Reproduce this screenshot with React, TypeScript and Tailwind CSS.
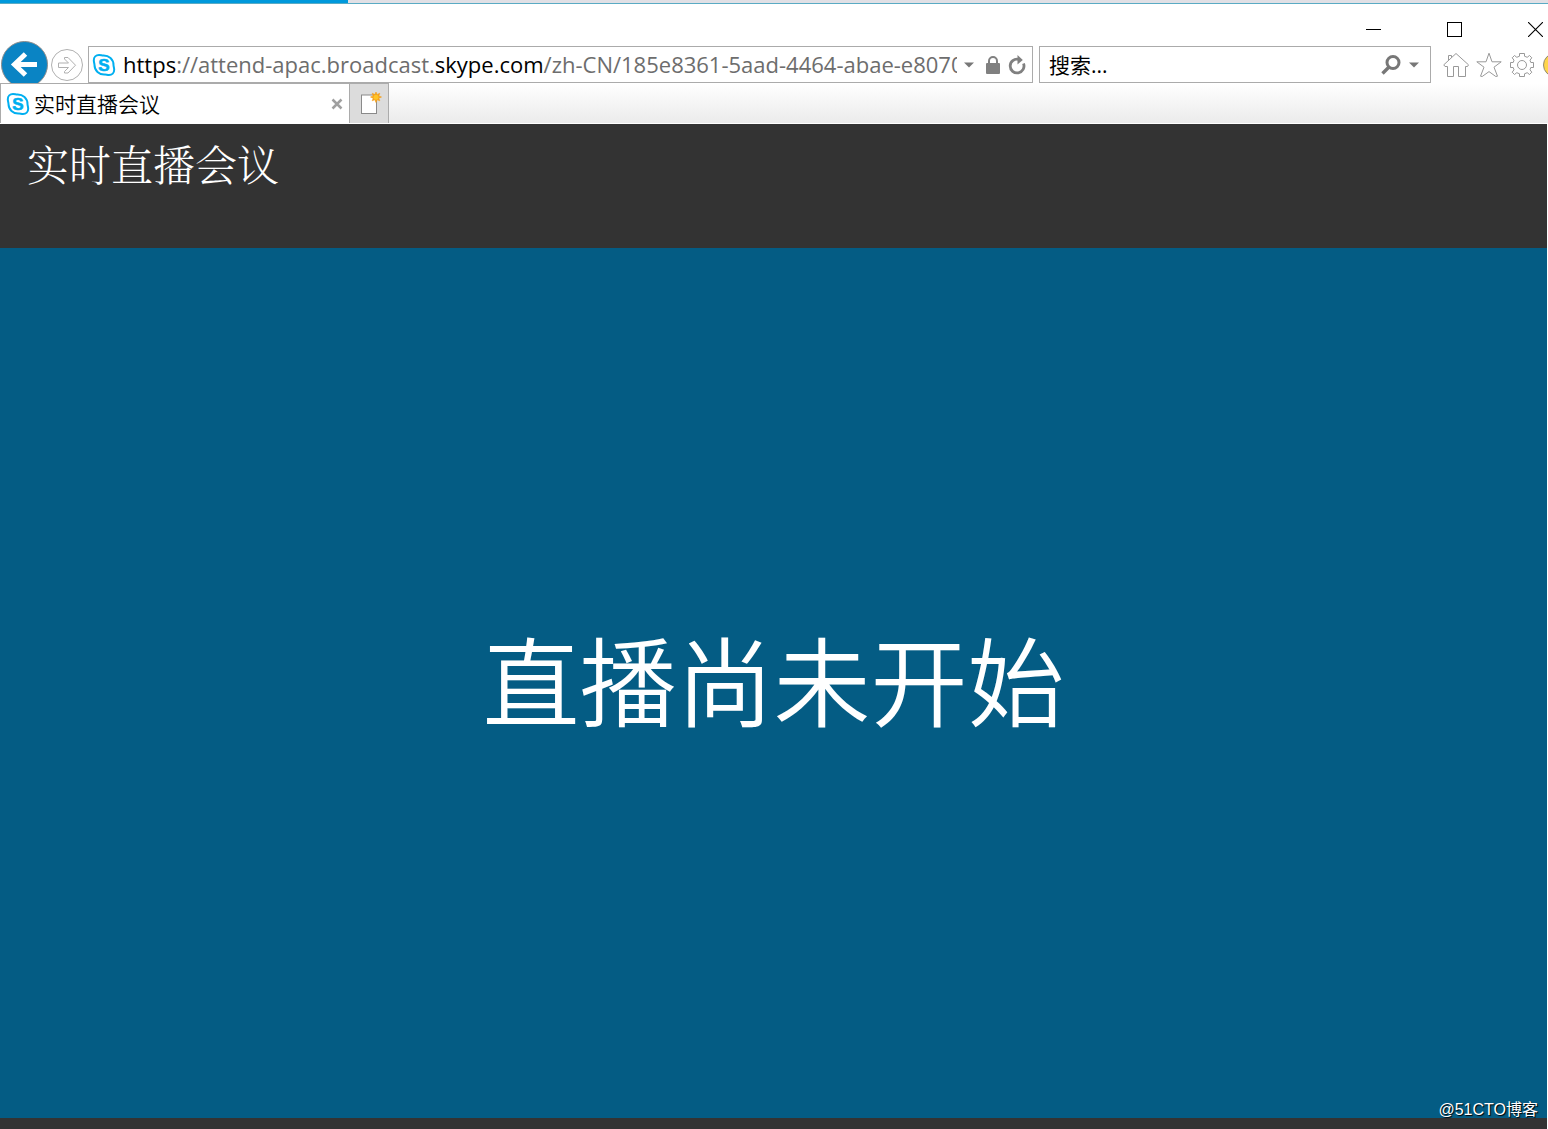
import React, { useState } from 'react';

const TITLE = '实时直播会议';

const URL_PARTS = [
  { text: 'https', strong: true },
  { text: '://attend-apac.broadcast.', strong: false },
  { text: 'skype.com', strong: true },
  { text: '/zh-CN/185e8361-5aad-4464-abae-e8070', strong: false },
];

const SkypeIcon: React.FC = () => (
  <svg
    width="24"
    height="24"
    viewBox="0 0 24 24"
    className="shrink-0"
    aria-hidden="true"
  >
    <path
      d="M7 2C8.800 2 9.800 2.500 11 2.500C17 2.200 21.500 6.500 21.500 12C21.500 13.500 22.200 14.800 22.200 16.800C22.200 20 20 22 17 22C15.200 22 14.200 21.400 12.800 21.500C7 21.800 2.500 17.500 2.500 12C2.500 10.500 1.800 9.200 1.800 7.200C1.800 4 4 2 7 2Z"
      fill="#fff"
      stroke="#00aff0"
      strokeWidth="2"
    />
    <text
      x="12"
      y="18"
      textAnchor="middle"
      fill="#00aff0"
      stroke="#00aff0"
      strokeWidth="0.6"
      className="font-['Liberation_Sans',sans-serif] text-[17px] font-bold"
    >
      S
    </text>
  </svg>
);

const Caret: React.FC = () => (
  <svg width="10" height="6" viewBox="0 0 10 6" aria-hidden="true">
    <path d="M0 0.500H10L5 5.500Z" fill="#777" />
  </svg>
);

const CaptionButtons: React.FC = () => (
  <div className="flex h-[42px] justify-end pt-[9px]">
    <button
      aria-label="最小化"
      className="flex w-[81px] items-center justify-center"
    >
      <svg width="15" height="15" shapeRendering="crispEdges">
        <path d="M0 7.500H15" stroke="#000" />
      </svg>
    </button>
    <button
      aria-label="最大化"
      className="flex w-[81px] items-center justify-center"
    >
      <svg width="15" height="15" shapeRendering="crispEdges">
        <rect x="0.5" y="0.5" width="14" height="14" fill="none" stroke="#000" />
      </svg>
    </button>
    <button aria-label="关闭" className="flex w-[53px] items-center pl-[33px]">
      <svg width="15" height="15">
        <path d="M0 0L15 15M15 0L0 15" stroke="#000" strokeWidth="1.1" />
      </svg>
    </button>
  </div>
);

const AddressBar: React.FC = () => {
  const url = URL_PARTS.map(p => p.text).join('');
  const [value, setValue] = useState(url);
  const [editing, setEditing] = useState(false);

  return (
    <div className="ml-[5px] flex h-[37px] min-w-0 flex-1 items-center border border-[#ababab] bg-white pl-[3px]">
      <SkypeIcon />
      <div className="relative ml-[7px] h-full min-w-0 flex-1 overflow-hidden text-[22px] leading-[35px]">
        {/* the host is highlighted until the field is being edited */}
        {!editing && (
          <label
            htmlFor="address"
            className="absolute inset-0 cursor-text overflow-hidden whitespace-nowrap text-[#6d6d6d]"
          >
            {URL_PARTS.map(part => (
              <span key={part.text} className={part.strong ? 'text-black' : ''}>
                {part.text}
              </span>
            ))}
          </label>
        )}
        <input
          id="address"
          type="text"
          className="h-full w-full outline-none"
          value={editing ? value : ''}
          onChange={e => setValue(e.target.value)}
          onFocus={() => setEditing(true)}
          onBlur={() => setEditing(false)}
        />
      </div>
      <button aria-label="显示地址列表" className="ml-[7px]">
        <Caret />
      </button>
      <button aria-label="安全报告" className="ml-[12px]">
        <svg width="14" height="18" viewBox="0 0 14 18">
          <path d="M3 8V5a4 4 0 0 1 8 0V8" fill="none" stroke="#808080" strokeWidth="2" />
          <rect y="7" width="14" height="11" rx="1" fill="#808080" />
        </svg>
      </button>
      <button aria-label="刷新" className="mr-[6px] ml-[8px]">
        <svg width="18" height="20" viewBox="0 0 18 20">
          <path
            d="M15.500 8.500A6.900 6.900 0 1 1 10.500 4.300"
            fill="none"
            stroke="#808080"
            strokeWidth="2.800"
          />
          <path d="M9.500 0L14.800 5L9.500 9.500Z" fill="#808080" />
        </svg>
      </button>
    </div>
  );
};

const SearchBox: React.FC = () => (
  <div className="ml-[6px] flex h-[37px] w-[392px] shrink-0 items-center border border-[#ababab] bg-white pr-[11px] pl-[9px]">
    <input
      type="text"
      aria-label="搜索"
      placeholder="搜索..."
      className="h-full min-w-0 flex-1 text-[21px] outline-none placeholder:text-black"
    />
    <button aria-label="搜索">
      <svg width="20" height="20" viewBox="0 0 20 20">
        <circle cx="12" cy="7.5" r="6" fill="none" stroke="#777" strokeWidth="3" />
        <path d="M8 12L1.500 18.500" stroke="#777" strokeWidth="3.400" />
      </svg>
    </button>
    <button aria-label="搜索选项" className="ml-[8px]">
      <Caret />
    </button>
  </div>
);

const ToolIcons: React.FC = () => (
  <div className="flex w-[117px] shrink-0 items-center overflow-hidden pl-[12px]">
    <button aria-label="主页" className="shrink-0">
      <svg width="26" height="26" viewBox="0 0 26 26" fill="#fff" stroke="#999">
        <path
          d="M13 1.500L0.800 12.800L2 14.500H4.500V24.500H10.500V14.500H15.500V24.500H22.500V14.500H24.500L25.500 12.800L13 1.500M5.500 8.500V3.500H8.500V5.500"
          strokeLinejoin="round"
        />
      </svg>
    </button>
    <button aria-label="收藏夹" className="ml-[7px] shrink-0">
      <svg width="26" height="26" viewBox="0 0 26 26" fill="#fff" stroke="#999">
        <path
          d="M13 1.200L16 9.800H25.200L18 15.200L21.500 24.200L19.800 24.500L13 19.600L6.200 24.500L4.500 24.200L8 15.200L0.800 9.800H10Z"
          strokeLinejoin="round"
        />
      </svg>
    </button>
    <button aria-label="工具" className="ml-[8px] shrink-0">
      <svg width="24" height="26" viewBox="0 0 24 26" fill="#fff" stroke="#999">
        <path
          d="M9.500 1.500H14.500V4.200L17.200 5.300L19.500 3.500L21.800 5.800L20 8.200L20.800 10.500H23.500V15.500H20.800L20 17.800L21.800 20.200L19.500 22.500L17.200 20.700L14.500 21.800V24.500H9.500V21.800L6.800 20.700L4.500 22.500L2.200 20.200L4 17.800L3.200 15.500H0.500V10.500H3.200L4 8.200L2.200 5.800L4.500 3.500L6.800 5.300L9.500 4.200Z"
          strokeLinejoin="round"
        />
        <circle cx="12" cy="13" r="4.500" />
      </svg>
    </button>
    <button aria-label="反馈" className="ml-[9px] shrink-0">
      <svg width="24" height="24" viewBox="0 0 24 24">
        <circle cx="12" cy="12" r="11.500" fill="#ffd54a" stroke="#8f8a78" />
      </svg>
    </button>
  </div>
);

const NavBar: React.FC = () => (
  <div className="flex h-[37px] items-center pl-[1px]">
    <button aria-label="后退" className="-my-[6px] shrink-0">
      <svg width="47" height="47" viewBox="0 0 47 47">
        <circle cx="23.500" cy="23.500" r="23" fill="#0a84c4" stroke="#8c8c8c" />
        <path
          d="M36 23.500H13.500M24.500 13L13.500 23.500L24.500 34"
          fill="none"
          stroke="#fff"
          strokeWidth="5"
        />
      </svg>
    </button>
    <button aria-label="前进" className="ml-[3px] shrink-0">
      <svg width="32" height="32" viewBox="0 0 32 32" fill="#fff" stroke="#b0b0b0">
        <circle cx="16" cy="16" r="15.500" />
        <path d="M7.500 14V18.500H17.500L13.500 22.500V24H17L24.500 16.200L17 8.500H13.500V10L17.500 14Z" />
      </svg>
    </button>
    <AddressBar />
    <SearchBox />
    <ToolIcons />
  </div>
);

const TabBar: React.FC = () => (
  <div className="relative z-10 flex h-[41px] border-b border-white bg-linear-to-b from-white to-[#ebebeb]">
    <div className="flex w-[350px] items-center border-t border-r border-l border-[#ababab] bg-white pr-[6px] pl-[5px]">
      <SkypeIcon />
      <span className="ml-[4px] flex-1 text-[21px] leading-[36px] font-[350]">
        {TITLE}
      </span>
      <button aria-label="关闭标签页">
        <svg width="12" height="12" viewBox="0 0 12 12">
          <path d="M1.500 1.500L10.500 10.500M10.500 1.500L1.500 10.500" stroke="#a0a0a0" strokeWidth="2.500" />
        </svg>
      </button>
    </div>
    <button
      aria-label="新建标签页"
      className="flex w-[39px] items-center border-t border-r border-[#ababab] bg-[#dcdcdc] pl-[10px]"
    >
      <svg width="24" height="26" viewBox="0 0 24 26">
        <rect x="1.500" y="4" width="15" height="18.500" fill="#fff" stroke="#8a8a8a" />
        <path
          d="M16 1L17.200 3.500L19.800 2.200L18.800 4.900L21.500 6L18.800 7.200L19.800 9.800L17.200 8.700L16 11.500L14.800 8.700L12.200 9.800L13.200 7.200L10.500 6L13.200 4.900L12.200 2.200L14.800 3.500Z"
          fill="#f5a01a"
          stroke="#f5a01a"
          strokeWidth="0.6"
        />
        <circle cx="16" cy="6.200" r="2.500" fill="#ffc425" />
      </svg>
    </button>
  </div>
);

const App: React.FC = () => (
  <div className="flex min-h-screen flex-col overflow-hidden bg-white font-['Open_Sans','Noto_Sans_CJK_SC',sans-serif] text-black">
    <div className="flex h-[4px] border-b border-[#5aabc4] bg-[#e1e0e5]">
      <div className="w-[348px] bg-[#0099dc]" />
    </div>
    <CaptionButtons />
    <NavBar />
    <TabBar />

    <div className="relative mr-px flex flex-1 flex-col bg-[#333]">
      <header className="h-[124px] pt-[15px] pl-[27px]">
        <h1 className="font-['Noto_Serif_CJK_SC','Noto_Sans_CJK_SC',serif] text-[42px] leading-[48px] font-light text-white">
          {TITLE}
        </h1>
      </header>
      <main className="mb-[11px] flex flex-1 items-center justify-center bg-[#045c84] pb-[12px]">
        <p className="font-['Noto_Sans_CJK_SC',sans-serif] text-[97px] leading-[120px] font-[350] text-white">
          直播尚未开始
        </p>
      </main>
      <span className="absolute right-[9px] bottom-[7px] font-['Liberation_Sans','Noto_Sans_CJK_SC',sans-serif] text-[16px] leading-[24px] text-white [text-shadow:1px_1px_1px_#000]">
        @51CTO博客
      </span>
    </div>
  </div>
);

export default App;
